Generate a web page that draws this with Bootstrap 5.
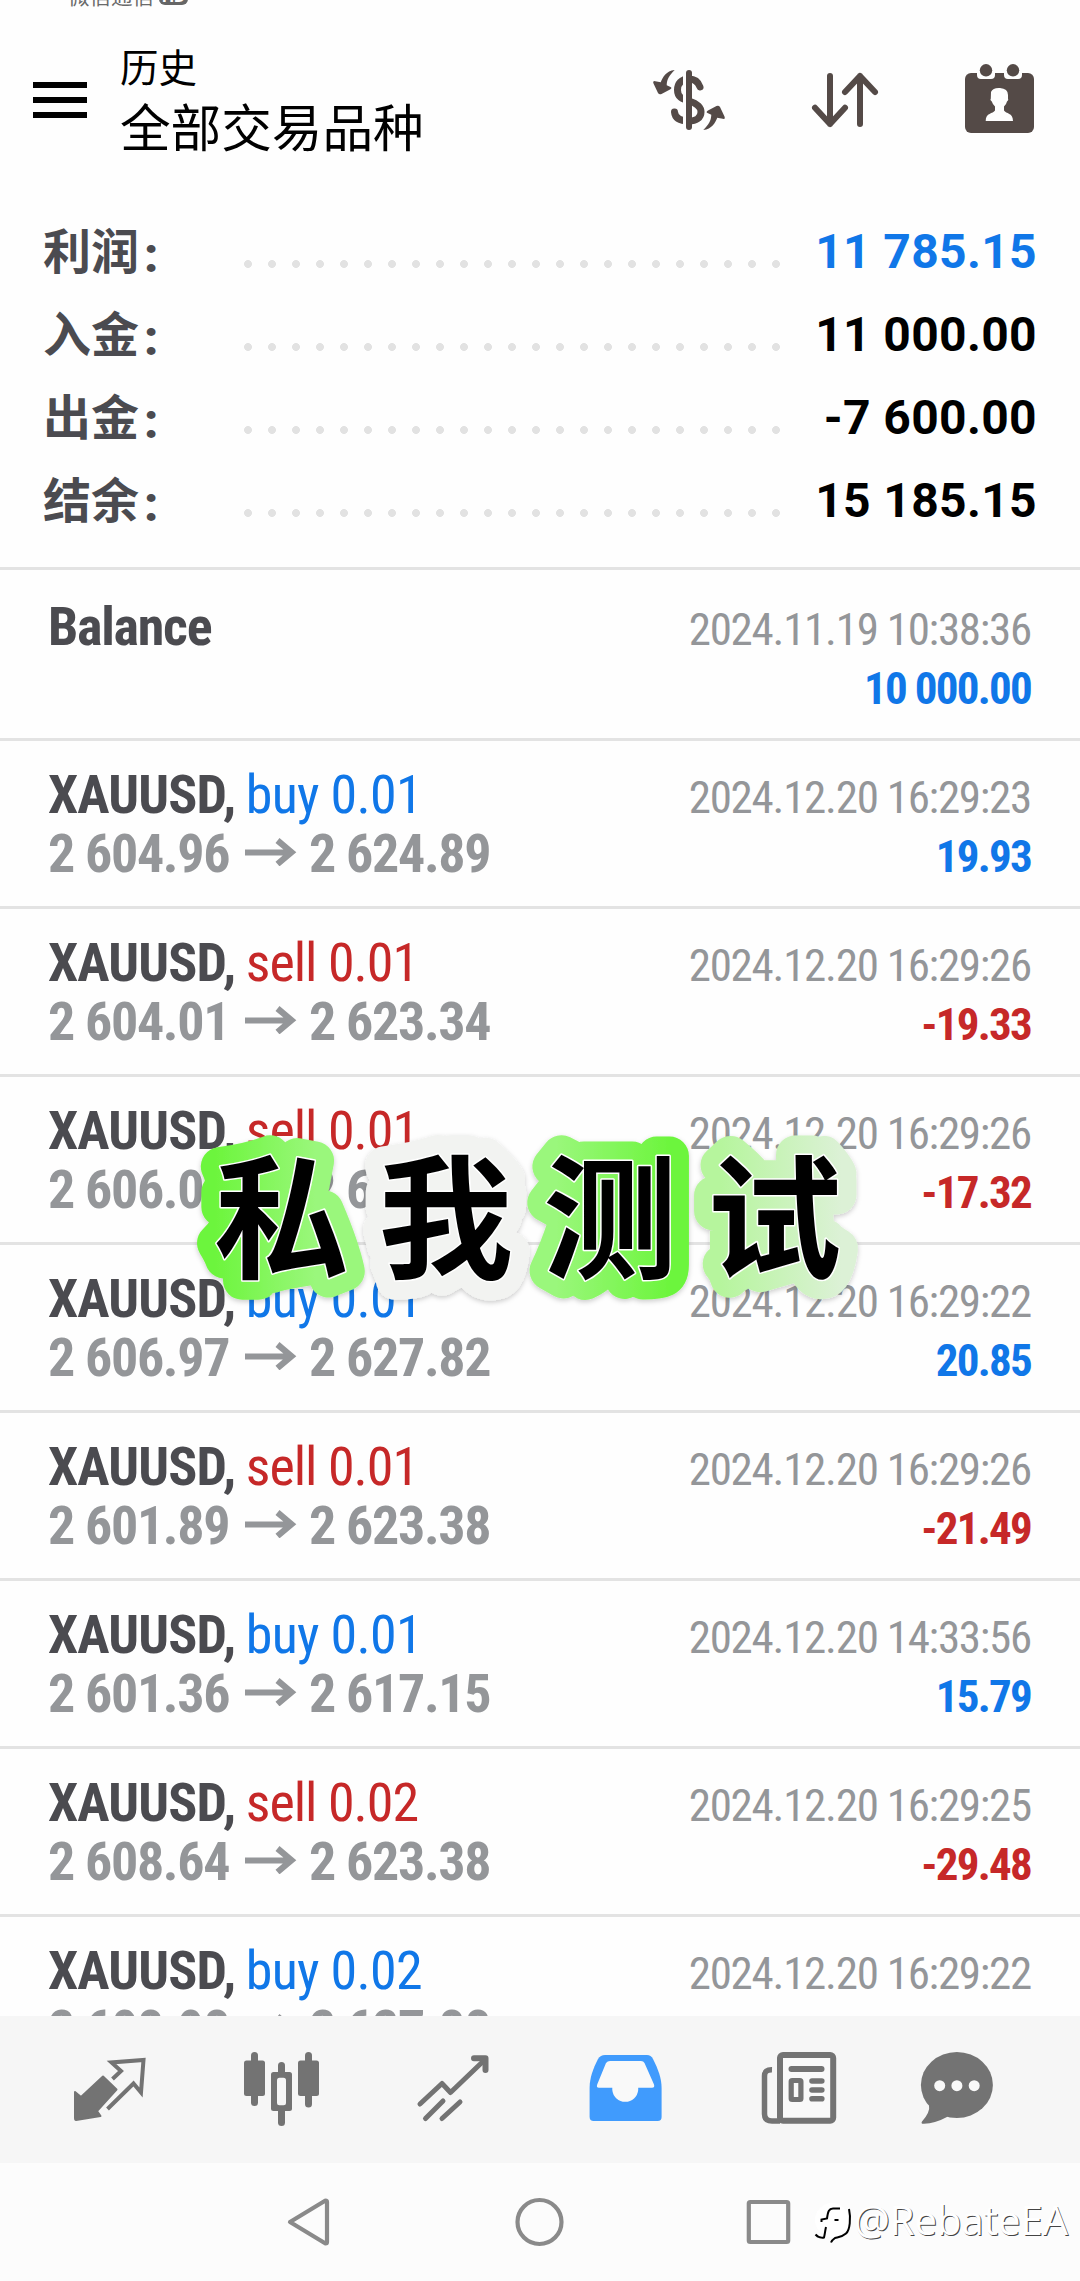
<!DOCTYPE html>
<html lang="zh-CN">
<head>
<meta charset="utf-8">
<meta name="viewport" content="width=device-width, initial-scale=1">
<title>历史</title>
<link href="https://cdn.jsdelivr.net/npm/bootstrap@5.3.0/dist/css/bootstrap.min.css" rel="stylesheet">
<style>
  body { font-family: Roboto, "Noto Sans CJK SC", sans-serif; background: #fefefe; color: #000; }
  .phone { width: 1080px; height: 2281px; }
  .cjk { font-family: "Noto Sans CJK SC", sans-serif; }
  .status-strip { height: 18px; padding-left: 68px; color: #6a6a6a; }
  .status-strip > div { margin-top: -17px; height: 24px; font-size: 21.500px; line-height: 24px; }
  .hd-tag { width: 29px; height: 20px; margin-left: 5px; border-radius: 6px; background: #666; color: #fff; font: 700 17px/23px Roboto, sans-serif; margin-top: 2px; }
  .app-head { height: 189px; padding: 0 41px 0 33px; }
  .burger { width: 54px; margin-top: 64px; gap: 9px; }
  .burger i { height: 6px; background: #000; }
  .head-text { margin-left: 33px; }
  .head-small { font-size: 38.5px; line-height: 50px; margin-top: 22px; }
  .head-big { font-size: 50.6px; line-height: 64px; margin-top: 3px; }
  .totals { height: 363px; padding: 0 42px 0 43px; border-bottom: 3px solid #e3e3e3; }
  .total-line { height: 83px; line-height: 83px; font-size: 48px; font-weight: 700; }
  .total-name { width: 193px; color: #4b4b50; }
  .total-name b { font-family: Roboto, sans-serif; margin-left: 5px; position: relative; top: 3px; }
  .dots { width: 552px; height: 12px; margin-top: 30px; background: radial-gradient(circle at center, #e2e2e2 3.6px, transparent 4.3px) 0 0 / 24px 12px; }
  .total-val { padding-top: 3px; margin-right: 1px; letter-spacing: .35px; }
  .c-blue { color: #1077e8; }
  .c-red { color: #c62828; }
  .deals { height: 1446px; font-family: "Roboto Condensed", Roboto, sans-serif; }
  .deal { height: 168px; padding: 24px 49px 0 48px; border-bottom: 3px solid #e3e3e3; }
  .deal:first-child { height: 171px; padding-top: 27px; }
  .deal-line { height: 59px; line-height: 59px; font-size: 54px; white-space: nowrap; }
  .sym { font-weight: 700; color: #4b4b50; letter-spacing: -.85px; }
  .sym-bal { letter-spacing: -1.25px; }
  .side-buy { letter-spacing: -.7px; margin-left: -2px; }
  .side-sell { letter-spacing: -1px; margin-left: -2px; }
  .price { font-weight: 700; color: #949699; letter-spacing: -1.35px; }
  .price svg { margin: 0 12px 0 16px; vertical-align: 6px; }
  .when { font-size: 45px; color: #949699; letter-spacing: -1.25px; }
  .gain { font-size: 45px; font-weight: 700; letter-spacing: -1.75px; }
  .gain-solo { padding-top: 3px; }
  .tabs { height: 147px; background: #f6f6f6; padding-left: 24px; }
  .tabs svg, .keys svg { display: block; flex: none; }
  .keys { height: 118px; background: #fcfcfc; }
  .sticker { left: 180px; top: 1110px; }
  .wm { left: 808px; top: 2193px; color: #fff; font: 400 40px/54px "Open Sans", sans-serif; text-shadow: 1px 1px 0 #444; }
</style>
<script src="https://cdn.jsdelivr.net/npm/bootstrap@5.3.0/dist/js/bootstrap.bundle.min.js"></script>
</head>
<body>
<div class="phone position-relative overflow-hidden d-flex flex-column">
  <div class="status-strip overflow-hidden cjk">
    <div class="d-flex"><span>微信通信</span><span class="hd-tag text-center">HD</span></div>
  </div>

  <header class="app-head d-flex">
    <div class="burger d-flex flex-column"><i></i><i></i><i></i></div>
    <div class="head-text cjk">
      <div class="head-small">历史</div>
      <div class="head-big">全部交易品种</div>
    </div>
    <svg class="ms-auto" width="400" height="140" viewBox="640 18 400 140" fill="#544a47">
      <path d="M701 87C699 81 695 79 690 79C682 79 678.500 84 678.500 90C678.500 97 683 99 690 101C698 103.500 702 107 702 112C702 118 697 121 690 121C681 121 676 118 675.500 112" fill="none" stroke="#544a47" stroke-width="7" stroke-linecap="round"/>
      <path d="M684 68h3v64h-3z" fill="#fefefe"/>
      <path d="M690 73v54" stroke="#544a47" stroke-width="6" stroke-linecap="round"/>
      <g id="turn"><path d="M675.700 70C667 71 664 77 661.700 82.300L655 81Q653.500 81.500 654.500 83.500L659 93Q660.300 95 662.500 94L671 89.500Q673.500 88 671.500 87L667.700 85.300C668 79 670 76 675.700 70Z"/></g>
      <use href="#turn" transform="rotate(180 690 100)"/>
      <path d="M831 76v48M816 107.700L831 124L846 107.700M861 124V76M846 92L861 76L876 92" fill="none" stroke="#544a47" stroke-width="6" stroke-linecap="round" stroke-linejoin="round"/>
      <rect x="966" y="73" width="69" height="60" rx="6"/>
      <path d="M978 70h18v5q0 4-4 4h-10q-4 0-4-4zM1005 70h18v5q0 4-4 4h-10q-4 0-4-4z" fill="#fefefe"/>
      <circle cx="987" cy="70.300" r="6.200"/><circle cx="1014" cy="70.300" r="6.200"/>
      <path d="M992 92Q994 87.500 1001 88Q1009 88.500 1009 95V98.500Q1010 100 1008 101.500Q1007.500 104 1005 106.500V110.500C1007 114 1014 112.500 1014 121H986.700C986.700 112.500 994 114 996 110.500V106.500Q993.500 104 992.800 101.500Q990.500 100 991.800 98.500Z" fill="#fefefe"/>
    </svg>
  </header>

  <section class="totals">
    <div class="total-line d-flex"><span class="total-name cjk">利润<b>:</b></span><span class="align-self-center dots"></span><span class="total-val ms-auto c-blue">11 785.15</span></div>
    <div class="total-line d-flex"><span class="total-name cjk">入金<b>:</b></span><span class="align-self-center dots"></span><span class="total-val ms-auto">11 000.00</span></div>
    <div class="total-line d-flex"><span class="total-name cjk">出金<b>:</b></span><span class="align-self-center dots"></span><span class="total-val ms-auto">-7 600.00</span></div>
    <div class="total-line d-flex"><span class="total-name cjk">结余<b>:</b></span><span class="align-self-center dots"></span><span class="total-val ms-auto">15 185.15</span></div>
  </section>

  <svg class="d-none"><symbol id="arrow" viewBox="0 0 52 28"><path d="M0 14.500H47M32.500 2.500L46.500 14.200L32.500 26" fill="none" stroke="#949699" stroke-width="6.200"/></symbol></svg>

  <main class="deals overflow-hidden">
    <div class="deal">
      <div class="deal-line d-flex justify-content-between align-items-baseline"><span class="sym sym-bal">Balance</span><span class="when">2024.11.19 10:38:36</span></div>
      <div class="deal-line d-flex justify-content-end align-items-baseline"><span class="gain gain-solo c-blue">10 000.00</span></div>
    </div>
    <div class="deal">
      <div class="deal-line d-flex justify-content-between align-items-baseline"><span><span class="sym">XAUUSD,</span> <span class="side-buy c-blue">buy 0.01</span></span><span class="when">2024.12.20 16:29:23</span></div>
      <div class="deal-line d-flex justify-content-between align-items-baseline"><span class="price">2 604.96<svg width="52" height="28"><use href="#arrow"/></svg>2 624.89</span><span class="gain c-blue">19.93</span></div>
    </div>
    <div class="deal">
      <div class="deal-line d-flex justify-content-between align-items-baseline"><span><span class="sym">XAUUSD,</span> <span class="side-sell c-red">sell 0.01</span></span><span class="when">2024.12.20 16:29:26</span></div>
      <div class="deal-line d-flex justify-content-between align-items-baseline"><span class="price">2 604.01<svg width="52" height="28"><use href="#arrow"/></svg>2 623.34</span><span class="gain c-red">-19.33</span></div>
    </div>
    <div class="deal">
      <div class="deal-line d-flex justify-content-between align-items-baseline"><span><span class="sym">XAUUSD,</span> <span class="side-sell c-red">sell 0.01</span></span><span class="when">2024.12.20 16:29:26</span></div>
      <div class="deal-line d-flex justify-content-between align-items-baseline"><span class="price">2 606.02<svg width="52" height="28"><use href="#arrow"/></svg>2 623.34</span><span class="gain c-red">-17.32</span></div>
    </div>
    <div class="deal">
      <div class="deal-line d-flex justify-content-between align-items-baseline"><span><span class="sym">XAUUSD,</span> <span class="side-buy c-blue">buy 0.01</span></span><span class="when">2024.12.20 16:29:22</span></div>
      <div class="deal-line d-flex justify-content-between align-items-baseline"><span class="price">2 606.97<svg width="52" height="28"><use href="#arrow"/></svg>2 627.82</span><span class="gain c-blue">20.85</span></div>
    </div>
    <div class="deal">
      <div class="deal-line d-flex justify-content-between align-items-baseline"><span><span class="sym">XAUUSD,</span> <span class="side-sell c-red">sell 0.01</span></span><span class="when">2024.12.20 16:29:26</span></div>
      <div class="deal-line d-flex justify-content-between align-items-baseline"><span class="price">2 601.89<svg width="52" height="28"><use href="#arrow"/></svg>2 623.38</span><span class="gain c-red">-21.49</span></div>
    </div>
    <div class="deal">
      <div class="deal-line d-flex justify-content-between align-items-baseline"><span><span class="sym">XAUUSD,</span> <span class="side-buy c-blue">buy 0.01</span></span><span class="when">2024.12.20 14:33:56</span></div>
      <div class="deal-line d-flex justify-content-between align-items-baseline"><span class="price">2 601.36<svg width="52" height="28"><use href="#arrow"/></svg>2 617.15</span><span class="gain c-blue">15.79</span></div>
    </div>
    <div class="deal">
      <div class="deal-line d-flex justify-content-between align-items-baseline"><span><span class="sym">XAUUSD,</span> <span class="side-sell c-red">sell 0.02</span></span><span class="when">2024.12.20 16:29:25</span></div>
      <div class="deal-line d-flex justify-content-between align-items-baseline"><span class="price">2 608.64<svg width="52" height="28"><use href="#arrow"/></svg>2 623.38</span><span class="gain c-red">-29.48</span></div>
    </div>
    <div class="deal">
      <div class="deal-line d-flex justify-content-between align-items-baseline"><span><span class="sym">XAUUSD,</span> <span class="side-buy c-blue">buy 0.02</span></span><span class="when">2024.12.20 16:29:22</span></div>
      <div class="deal-line d-flex justify-content-between align-items-baseline"><span class="price">2 608.98<svg width="52" height="28"><use href="#arrow"/></svg>2 627.88</span><span class="gain c-blue">37.80</span></div>
    </div>
  </main>

  <nav class="tabs d-flex">
    <svg width="172" height="147" viewBox="24 2016 172 147">
      <path d="M75 2092L81 2097L103 2076.500L116.500 2089.500L97 2111L100.500 2116L76 2120Q75 2120 75 2118Z" fill="#737373" stroke="#737373" stroke-width="2" stroke-linejoin="round"/>
      <path d="M112.500 2079L121 2071L111.500 2062.500L143.500 2060L141 2092.500L133.500 2083.500L107.500 2109" fill="none" stroke="#737373" stroke-width="4"/>
    </svg>
    <svg width="172" height="147" viewBox="196 2016 172 147" fill="#737373">
      <rect x="244" y="2060.500" width="21" height="35.500" rx="2.500"/><rect x="251" y="2052" width="7" height="54" rx="3.500"/>
      <rect x="298" y="2060.500" width="21" height="35.500" rx="2.500"/><rect x="305" y="2052" width="7" height="55.500" rx="3.500"/>
      <rect x="271" y="2072" width="21" height="39" rx="2.500"/><rect x="278" y="2062" width="7" height="64" rx="3.500"/>
      <rect x="277" y="2077.700" width="9" height="27.600" rx="2.500" fill="#f6f6f6"/>
    </svg>
    <svg width="172" height="147" viewBox="368.500 2016 172 147" fill="none" stroke="#737373" stroke-width="5" stroke-linecap="round" stroke-linejoin="round">
      <path d="M420.500 2104L442.500 2083.500L451 2092.500L485 2060"/>
      <path d="M474.500 2058.200H486V2070" stroke-width="6"/>
      <path d="M426 2118.500L443.500 2101M442.500 2118.500L460.500 2102"/>
    </svg>
    <svg width="173" height="147" viewBox="541 2016 173 147">
      <path d="M606 2055H648Q652 2055 654 2059C659 2069 662.600 2078 662.600 2088V2117Q662.600 2121 658.600 2121H594.600Q590.600 2121 590.600 2117V2088C590.600 2078 594 2069 599 2059Q601.500 2055 606 2055Z" fill="#409bfd"/>
      <path d="M611 2061H642Q644.500 2061 645.500 2063L655 2084.500Q656 2087.800 653 2087.800H639.200V2090A13 13 0 0 1 613.300 2090V2087.800H600Q597 2087.800 598.200 2084.500L607 2063Q608.500 2061 611 2061Z" fill="#f9f9f9"/>
    </svg>
    <svg width="167" height="147" viewBox="714 2016 167 147" fill="none" stroke="#737373">
      <rect x="781" y="2055" width="53.200" height="65.700" rx="3" stroke-width="6" fill="#f9f9f9"/>
      <path d="M773 2069.700Q765.500 2069.500 765.500 2076V2114Q765.500 2121 773 2121H781" stroke-width="5.500"/>
      <path d="M792.500 2069H822.500" stroke-width="6" stroke-linecap="round"/>
      <rect x="792.200" y="2080.500" width="9.700" height="19" rx="1" stroke-width="5.200"/>
      <path d="M813 2081H822.800M813 2090H822.800M813 2098.700H822.800" stroke-width="5.600" stroke-linecap="round"/>
    </svg>
    <svg width="156" height="147" viewBox="881 2016 156 147" fill="#737373">
      <ellipse cx="957.900" cy="2085" rx="36" ry="33"/>
      <path d="M930 2105Q931.500 2112 923 2121.500Q921.500 2124 925 2123.800Q936 2123.500 949 2116.500Z"/>
      <g fill="#f9f9f9"><circle cx="940.700" cy="2085.700" r="5.500"/><circle cx="957.900" cy="2085.700" r="5.500"/><circle cx="975.200" cy="2085.700" r="5.500"/></g>
    </svg>
  </nav>

  <div class="keys">
    <svg width="1080" height="118" viewBox="0.500 2163 1080 118" fill="none" stroke="#8a8a8a" stroke-width="4.200" stroke-linejoin="round">
      <path d="M290.500 2222L326 2200.500Q327.500 2200.500 327.500 2202V2242Q327.500 2243.500 326 2243.500Z"/>
      <circle cx="540" cy="2222" r="22"/>
      <rect x="749.300" y="2202" width="39.400" height="40" rx="1.500"/>
    </svg>
  </div>

  <div class="wm position-absolute d-flex align-items-center">
    <svg width="46" height="54" viewBox="808 2195 46 54" fill="none" stroke="#000" stroke-width="2">
      <circle cx="832" cy="2222" r="17" fill="#fff" stroke="none"/>
      <path d="M821.500 2224V2221.500L827 2220.500C828 2213 829 2210.500 833 2210.500H840M834.500 2222H838.500M815.500 2236.500C818 2239.500 822 2240 824 2239.500C825 2236 825 2233 826 2229"/>
      <path d="M849 2211C851 2220 850 2232 846 2235.500C842 2239 839 2239 835 2240Q832 2242 831 2244.500"/>
    </svg><span>@RebateEA</span>
  </div>

  <svg class="sticker position-absolute" width="700" height="210" viewBox="180 1110 700 210" font-family="'Noto Sans CJK SC', sans-serif" font-weight="700" font-size="134.500">
    <defs>
      <linearGradient id="g1"><stop offset="0" stop-color="#6cf53c"/><stop offset=".75" stop-color="#9af77b"/></linearGradient>
      <linearGradient id="g3"><stop offset=".1" stop-color="#9af77b"/><stop offset=".95" stop-color="#6cf53c"/></linearGradient>
      <linearGradient id="g4"><stop offset=".1" stop-color="#b6f59d"/><stop offset="1" stop-color="#dcf1d6"/></linearGradient>
      <filter id="sh" x="-20%" y="-20%" width="140%" height="140%"><feDropShadow dx="0" dy="2" stdDeviation="2.500" flood-color="#000" flood-opacity=".2"/></filter>
    </defs>
    <g stroke-width="39" stroke-linejoin="round" filter="url(#sh)" aria-hidden="true">
      <text x="214" y="1268" fill="url(#g1)" stroke="url(#g1)">私</text>
      <text x="378.500" y="1268" fill="#f2f3f1" stroke="#f2f3f1">我</text>
      <text x="543" y="1268" fill="url(#g3)" stroke="url(#g3)">测</text>
      <text x="707" y="1268" fill="url(#g4)" stroke="url(#g4)">试</text>
    </g>
    <g fill="#000" stroke="#fff" stroke-width="3" paint-order="stroke" stroke-linejoin="round">
      <text x="214" y="1268">私</text><text x="378.500" y="1268">我</text><text x="543" y="1268">测</text><text x="707" y="1268">试</text>
    </g>
  </svg>
</div>
</body>
</html>
